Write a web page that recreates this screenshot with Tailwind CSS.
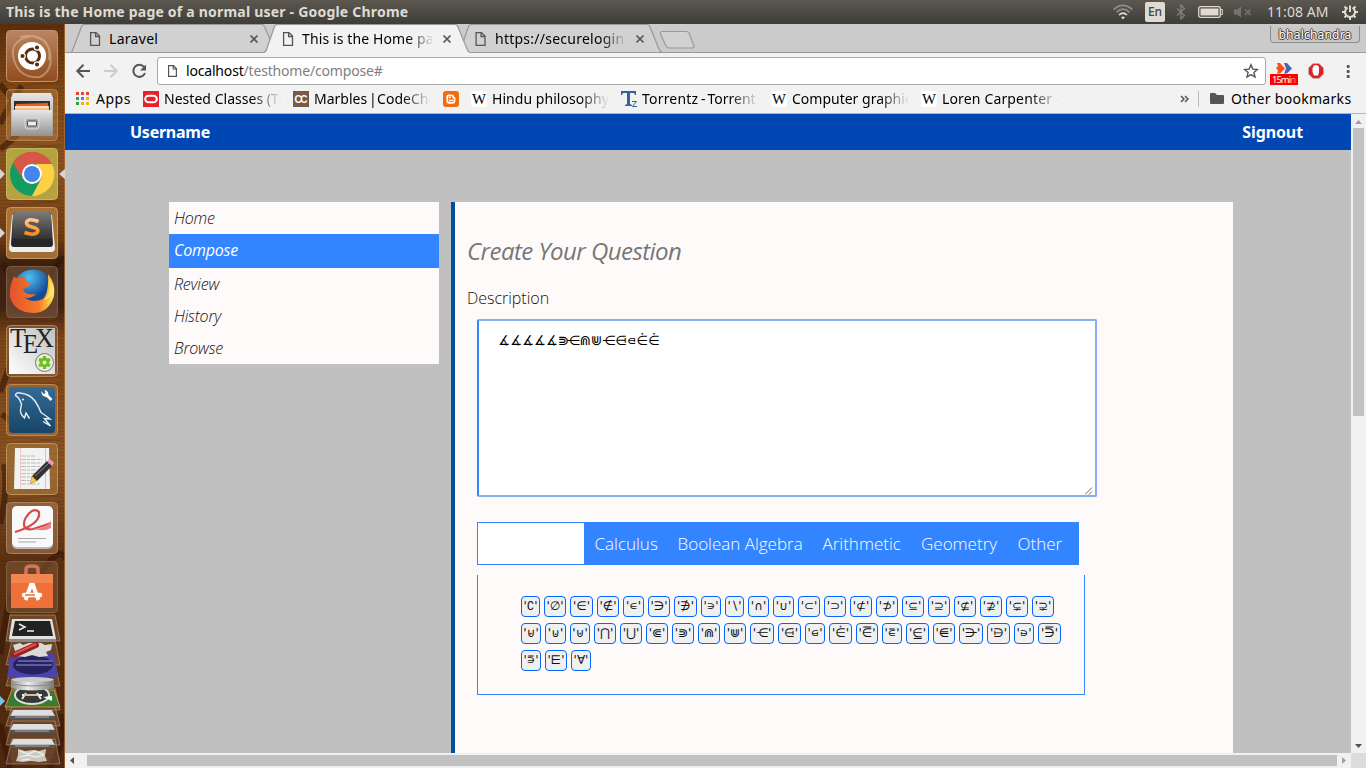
<!DOCTYPE html>
<html lang="en"><head><meta charset="utf-8"><title>This is the Home page of a normal user</title>
<script src="https://cdn.jsdelivr.net/npm/@tailwindcss/browser@4"></script></head>
<body class="w-[1366px] h-[768px] overflow-hidden flex flex-col font-['Noto_Sans','DejaVu_Sans',sans-serif] text-black">
<header class="h-6 shrink-0 bg-linear-to-b from-[#5c5850] to-[#3e3d39] text-[#dfdbd2] flex items-center justify-between pl-[6px] pr-[8px]">
  <h1 class="text-[14px] font-bold leading-6 whitespace-nowrap tracking-[0.21px]">This is the Home page of a normal user - Google Chrome</h1>
  <div class="flex items-center h-6">
    <svg class="w-5 h-5 mr-3" viewBox="0 0 20 20" fill="none" stroke-width="1.7"><path d="M0.7 7.5Q10-.8 19.300 7.500M3.500 10.300Q10 4 16.500 10.300" stroke="#908d85"/><path d="M6 13Q10 9 14 13" stroke="#dfdbd2"/><path d="M8 15.300Q10 13.500 12 15.300L10 17.500Z" fill="#dfdbd2"/></svg>
    <span class="w-5 h-5 rounded-[2px] bg-[#dfdbd2] text-[#45443f] text-[12px] leading-5 text-center mr-[11px] font-medium">En</span>
    <svg class="w-[10px] h-4 mr-[12px]" viewBox="0 0 10 16" fill="none" stroke="#85827a" stroke-width="1.3"><path d="M1 4.500L8.500 11.500L5 15V1L8.500 4.500L1 11.500"/></svg>
    <svg class="w-[25px] h-3 mr-[11px]" viewBox="0 0 25 12"><rect x=".7" y=".7" width="21.600" height="10.600" rx="2" fill="none" stroke="#dfdbd2" stroke-width="1.300"/><rect x="2.500" y="2.500" width="18" height="7" fill="#dfdbd2"/><path d="M23 3.500h1.300v5H23" fill="none" stroke="#dfdbd2"/></svg>
    <svg class="w-[18px] h-3 mr-[15px]" viewBox="0 0 18 12"><path d="M0 3.500h3L7 .5v11L3 8.500H0Z" fill="#75736b"/><path d="M11 3.500l5.500 5.500M16.500 3.500L11 9" stroke="#75736b" stroke-width="1.700"/></svg>
    <span class="text-[14px] leading-6 tracking-[.05px] w-[61px] whitespace-nowrap mr-[14px]">11:08 AM</span>
    <svg class="w-4 h-4" viewBox="0 0 16 16" fill="none" stroke="#dfdbd2"><path d="M5.500 3.700A5 5 0 1 0 10.500 3.700" stroke-width="2"/><path d="M8 1.500V8" stroke-width="2"/><path d="M2.500 2.500l2 2M13.500 2.500l-2 2M0 8h3M13 8h3M2.500 13.500l2-2M13.500 13.500l-2-2M8 13v3" stroke-width="2"/></svg>
  </div>
</header>
<div class="flex h-[744px]">
<!-- launcher -->
<aside class="w-[65px] shrink-0 h-full relative overflow-hidden bg-[#683711]">
 <svg class="absolute inset-0 w-[65px] h-[744px]" viewBox="0 0 65 744"><defs>
  <linearGradient id="wood" x1="0" y1="0" x2="0" y2="1"><stop offset="0" stop-color="#5e2f0a"/><stop offset=".1" stop-color="#834a17"/><stop offset=".2" stop-color="#8a5422"/><stop offset=".29" stop-color="#6e3b10"/><stop offset=".32" stop-color="#3c2110"/><stop offset=".38" stop-color="#402312"/><stop offset=".42" stop-color="#7c451a"/><stop offset=".6" stop-color="#8a5322"/><stop offset=".72" stop-color="#5c3112"/><stop offset="1" stop-color="#4f280e"/></linearGradient>
  <pattern id="grain" width="65" height="7" patternUnits="userSpaceOnUse"><path d="M0 2Q20 0 35 2T65 1M0 5Q25 6 40 4T65 5" fill="none" stroke="#371700" stroke-opacity=".22"/></pattern></defs>
  <rect width="65" height="744" fill="url(#wood)"/><rect width="65" height="744" fill="url(#grain)"/>
  <path d="M0 100Q14 72 22 62M0 60L14 78M0 125Q30 105 22 90M2 240L18 262M45 262Q60 230 65 236M0 368Q12 340 16 310M2 390L14 400M0 500Q8 470 4 440M40 550Q60 520 65 535M0 630L10 570M10 744L0 700M50 744Q65 720 62 690" fill="none" stroke="#35140a" stroke-opacity=".6" stroke-width="6"/>
  <path d="M64.500 0V744" stroke="#b8702f" stroke-opacity=".7"/>
  <g fill="#d9d5d0"><path d="M0 145l5 5-5 5ZM0 204l5 5-5 5ZM65 145l-6 5 6 5Z"/></g><path d="M0 672l5 5-5 5Z" fill="#74c5ee"/>
 </svg>
 <div class="relative flex flex-col gap-[7px] pl-[6px] pt-[6px]">
  <svg class="w-[52px] h-[52px]" viewBox="0 0 52 52"><defs><linearGradient id="ub" x1="0" y1="0" x2="0" y2="1"><stop stop-color="#b98563"/><stop offset="1" stop-color="#914c1c"/></linearGradient></defs><rect x=".5" y=".5" width="51" height="51" rx="4" fill="url(#ub)" stroke="#bf9373"/><path d="M8 30Q2 10 26 6Q46 8 43 30M8 30Q14 49 34 47Q49 40 43 18M14 7Q38 2 44 22" fill="none" stroke="#e4c1a4" stroke-opacity=".5" stroke-width="2"/><circle cx="26" cy="26" r="14" fill="#fff"/><circle cx="26.500" cy="26" r="7" fill="none" stroke="#5a2c10" stroke-width="3"/><g fill="#5a2c10" stroke="#fff" stroke-width="1.200"><circle cx="16.500" cy="26" r="2.700"/><circle cx="31" cy="17.500" r="2.700"/><circle cx="31" cy="34.500" r="2.700"/></g></svg>
  <svg class="w-[52px] h-[52px]" viewBox="0 0 52 52"><defs><linearGradient id="gr" x1="0" y1="0" x2="0" y2="1"><stop stop-color="#e6e6e6"/><stop offset="1" stop-color="#929292"/></linearGradient></defs><rect x=".5" y=".5" width="51" height="51" rx="4" fill="#c58b4a" fill-opacity=".4" stroke="#c49665" stroke-opacity=".7"/><path d="M7 4H45L47 9V47H5V9Z" fill="url(#gr)"/><rect x="8" y="12" width="36" height="10" fill="#303030"/><path d="M10 21V15l32-1v7Z" fill="#e86225"/><path d="M9 21v-4h34v4Z" fill="#f8c07e"/><path d="M9 18H42" stroke="#fff"/><rect x="6" y="21" width="40" height="26" rx="1" fill="url(#gr)"/><rect x="19" y="29" width="14" height="11" rx="3" fill="#aaa" stroke="#ddd"/><rect x="21.500" y="32" width="9" height="5" rx="1" fill="#eee" stroke="#444"/></svg>
  <svg class="w-[52px] h-[52px]" viewBox="0 0 52 52"><rect x=".5" y=".5" width="51" height="51" rx="4" fill="#b4a33f" stroke="#c4b661"/><circle cx="26" cy="26" r="22" fill="#149b5f"/><path d="M7 15A22 22 0 0 1 46 16H26L17 31Z" fill="#d85748"/><path d="M46 16A22 22 0 0 1 26 48L36 29L30 16Z" fill="#fdd046"/><circle cx="26" cy="26" r="10" fill="#fff"/><circle cx="26" cy="26" r="8" fill="#4485ed"/></svg>
  <svg class="w-[52px] h-[52px]" viewBox="0 0 52 52"><defs><linearGradient id="su" x1="0" y1="0" x2="0" y2="1"><stop stop-color="#7a7a7a"/><stop offset=".5" stop-color="#555"/><stop offset="1" stop-color="#313131"/></linearGradient><linearGradient id="so" x1="0" y1="0" x2="0" y2="1"><stop stop-color="#ffc98a"/><stop offset="1" stop-color="#f98b1c"/></linearGradient></defs><rect x=".5" y=".5" width="51" height="51" rx="4" fill="#b77e3e" fill-opacity=".8" stroke="#c6965d"/><path d="M6 8L3 41q0 4 4 4H45q4 0 4-4L46 8Z" fill="#ededed"/><path d="M10 5H42q3 0 3 3L47 37q0 3-3 3H8q-3 0-3-3L7 8q0-3 3-3Z" fill="#262626"/><path d="M10 5H42q3 0 3 3L46 32H6L7 8q0-3 3-3Z" fill="url(#su)"/><path d="M32.500 14.500Q22 10.500 20.500 15.500Q20 18.500 26 20Q33 21.500 31.500 25Q29 29 18.500 25.500" fill="none" stroke="url(#so)" stroke-width="3.600"/></svg>
  <svg class="w-[52px] h-[52px]" viewBox="0 0 52 52"><defs><radialGradient id="fx" cx=".4" cy=".2"><stop stop-color="#4ec0f3"/><stop offset="1" stop-color="#164b94"/></radialGradient><linearGradient id="fo" x1="0" y1="0" x2="1" y2="0"><stop stop-color="#e5512d"/><stop offset=".65" stop-color="#f47d28"/><stop offset="1" stop-color="#ffe74a"/></linearGradient></defs><rect x=".5" y=".5" width="51" height="51" rx="4" fill="#82624a" fill-opacity=".5" stroke="#7b5a43"/><circle cx="27" cy="24" r="20.500" fill="url(#fx)"/><path d="M8 10Q10 14 15 11Q20 10 20 16L25 17Q23 22 17 23Q19 30 30 28Q23 34 18 31Q26 38 37 33Q43 27 42 8Q50 18 48 30Q43 47 27 47Q8 46 4 31Q3 20 8 10Z" fill="url(#fo)"/><path d="M43 14Q46 27 38 34Q44 33 46 27Q45 36 37 41Q48 34 48 23Z" fill="#ffe46b"/></svg>
  <svg class="w-[52px] h-[52px]" viewBox="0 0 52 52"><defs><linearGradient id="tx" x1="1" y1="0" x2="0" y2="1"><stop stop-color="#c0c0c0"/><stop offset="1" stop-color="#fff"/></linearGradient></defs><rect x=".5" y=".5" width="51" height="51" rx="4" fill="#8a663d" fill-opacity=".6" stroke="#b08754"/><rect x="3" y="3" width="46" height="46" fill="url(#tx)"/><g font-family="Liberation Serif" font-size="27" fill="#222"><text x="4" y="22" textLength="16" lengthAdjust="spacingAndGlyphs">T</text><text x="17" y="28" textLength="15" lengthAdjust="spacingAndGlyphs">E</text><text x="29" y="22" textLength="19" lengthAdjust="spacingAndGlyphs">X</text></g><circle cx="38.500" cy="37.500" r="9" fill="#e9eed9" stroke="#777"/><circle cx="38.500" cy="37.500" r="3.500" fill="none" stroke="#70bd22" stroke-width="3"/><path d="M38.500 31v3M38.500 41v3M33 34l2.500 1.500M41.500 39.500L44 41M33 41l2.500-1.500M41.500 35.500L44 34" stroke="#70bd22" stroke-width="3"/></svg>
  <svg class="w-[52px] h-[52px]" viewBox="0 0 52 52"><defs><linearGradient id="my" x1="0" y1="0" x2="0" y2="1"><stop stop-color="#356b96"/><stop offset="1" stop-color="#174568"/></linearGradient></defs><rect x=".5" y=".5" width="51" height="51" rx="4" fill="#a8763c" fill-opacity=".6" stroke="#b98b52"/><rect x="3" y="3" width="46" height="46" rx="4" fill="url(#my)"/><path d="M23.500 34.500L20 29L18.500 34Q14 30 14.500 26L15.500 20Q13 13 9.500 11.500Q10 8 14 9Q24 10 29 17Q33 23 35 28.500Q39 31 44 35L38.500 34.500Q41 38 44.500 42L37 37.500" fill="none" stroke="#e4eef5" stroke-width="1.400"/><circle cx="17" cy="15.500" r=".9" fill="#fff"/><path d="M35.500 7a5 5 0 0 0 5 6l4 4 2-2-4-4a5 5 0 0 0-4-5l1 3-2 1Z" fill="#fff"/></svg>
  <svg class="w-[52px] h-[52px]" viewBox="0 0 52 52"><rect x=".5" y=".5" width="51" height="51" rx="4" fill="#a7783e" fill-opacity=".6" stroke="#bb9159"/><path d="M9 5H43L44 46H8Z" fill="#f2f2f2"/><path d="M14.500 5V46" stroke="#f3b9b9" stroke-width=".7"/><path d="M39.500 5V46" stroke="#9fb9e2" stroke-width=".7"/><path d="M15 13H29M15 16.500H36M15 20H36M15 23.500H36M15 27H33M15 30.500H30M15 34H26M15 37.500H24M15 41H35" stroke="#b5b5b5" stroke-width=".9" stroke-dasharray="5 1 3 1"/><path d="M26 33L41 18l5 5L31 38L24 41Z" fill="#333"/><path d="M41 18l2-2q2 0 5 4l-2 3Z" fill="#eb9bc0"/><path d="M26 33l5 5-7 3Z" fill="#efc946"/><path d="M29 33L43 20" stroke="#888"/></svg>
  <svg class="w-[52px] h-[52px]" viewBox="0 0 52 52"><rect x=".5" y=".5" width="51" height="51" rx="4" fill="#a17654" fill-opacity=".6" stroke="#a98062"/><rect x="6" y="4" width="41" height="43" rx="5" fill="#bbb"/><rect x="6" y="4" width="41" height="41" rx="5" fill="#f9f9f9"/><path d="M9 30Q35 22 33 10Q27 4 19 17Q15 29 27 27Q37 24 45 21" fill="none" stroke="#d7484b" stroke-width="2.200"/><path d="M28 27Q40 26 45 19V26Q38 30 28 27Z" fill="#e58586"/><path d="M12 36.500H40M12 40H30" stroke="#aaa" stroke-width="1.200"/></svg>
  <svg class="w-[52px] h-[52px]" viewBox="0 0 52 52"><rect x=".5" y=".5" width="51" height="51" rx="4" fill="#7c5535" fill-opacity=".6" stroke="#82603e"/><path d="M20 17V8q0-3 6-3t6 3v9" fill="none" stroke="#d8745c" stroke-width="3.500"/><path d="M5 13H47V47H5Z" fill="#ee7139"/><path d="M5 13H47V22H5Z" fill="#f38550"/><path d="M19.500 39L25 24H27L32.500 39" fill="none" stroke="#fff" stroke-width="4"/><path d="M18 34H34" stroke="#fff" stroke-width="4.500" stroke-linecap="round"/><path d="M19 34H29" stroke="#ed6d30" stroke-width="1.500"/></svg>
 </div>
 <svg class="relative w-[65px] h-[155px]" viewBox="0 0 65 155"><defs><linearGradient id="metal" x1="0" y1="0" x2="1" y2="0"><stop stop-color="#8d8d8d"/><stop offset=".4" stop-color="#eee"/><stop offset="1" stop-color="#777"/></linearGradient></defs>
  <g fill="#d4b091" fill-opacity=".2" stroke="#c7ab92" stroke-opacity=".5"><path d="M10 2H55L60 28H6ZM12 27H55L60 52H6ZM12 51H55L60 73H6ZM12 75H55L60 97H6ZM12 93H55L60 113H6ZM12 108H55L60 132H6ZM12 126H55L60 151H6Z"/></g>
  <path d="M12 6H52L56 26H9Z" fill="#e0e0dd"/><path d="M15 8H50L53 23H12Z" fill="#222"/><path d="M9 26H56v3H9Z" fill="#888"/><path d="M19 11l6 3-6 3M27 18h7" fill="none" stroke="#eee" stroke-width="1.500"/>
  <path d="M11 41H54L58 64H7Z" fill="#4d42a8"/><ellipse cx="33" cy="52" rx="20" ry="9.500" fill="#25235f"/><path d="M18 48H52M16 52H52" stroke="#9c97d5"/><path d="M13 32l7-2 3 2 6-2 12 0 4 2 7-1-1 6-5 2 2 4-9 1-7-2-7 2-8-1Z" fill="#d9d9d9"/><path d="M14 42L36 32" stroke="#982322" stroke-width="6" stroke-linecap="round"/><path d="M14 41L36 31" stroke="#db534b" stroke-width="2"/>
  <path d="M12 77H54L60 94H5Z" fill="#357d34" stroke="#ed813c"/><ellipse cx="32" cy="82" rx="17" ry="9" fill="#343a38" stroke="#ddd" stroke-width="2"/><path d="M22 82H42M26 80l-4 6M37 80l4 6" stroke="#eee" stroke-width="2"/><path d="M24 82H38" stroke="#f17a36"/><path d="M43 84L52 83V88Z" fill="#fff"/>
  <path d="M11 66V75Q32 80 54 75V66Z" fill="url(#metal)"/><ellipse cx="32.500" cy="66.500" rx="21" ry="2.500" fill="#c9c9c9"/><path d="M12 71Q32 75 53 71" fill="none" stroke="#888"/>
  <g id="drive"><path d="M13 97H52L55 103V106H10V103Z" fill="#bcbcbc"/><path d="M14 97H51l3 5H11Z" fill="#dedede"/><path d="M10 103H55v3H10Z" fill="#555"/><path d="M15 104H49" stroke="#aaa"/></g>
  <use href="#drive" y="14"/><use href="#drive" y="29"/>
  <path d="M18 136l7 2 8-1 6 1 7-2-1 7 2 5-8 1-8-1-9 1-6-1 2-6Z" fill="#c9c7be"/><path d="M20 138l8 3 7-3 8 3M20 144l8-2 8 2 8-2M22 147l8-1" fill="none" stroke="#eceae3" stroke-width="1.500"/>
 </svg>
</aside>
<!-- browser -->
<section class="w-[1301px] flex flex-col">
 <div class="h-[29px] shrink-0 relative bg-[#cbcbcb]">
  <svg class="absolute inset-0 w-[1301px] h-[33px]" viewBox="65 24 1301 33" fill="none" stroke="#999" stroke-width="1.200"><path d="M65 52.500H1366"/><path d="M71 52.500Q72 52 73 49L81 28Q82 24.500 84 24.500H262Q264 24.500 265 28L274 48Q275 52 277 52.500Z" fill="#d1d1d1"/><path d="M457 52.500Q460 51 461 48L468 28Q469 24.500 471 24.500H647Q649 24.500 650 27L659 49Q660 52 663 52.500Z" fill="#d1d1d1"/><path d="M262 54L264 52.500Q266 51 267 48L274 28Q275 24.500 277 24.500H455Q457 24.500 458 27L467 49Q468 52 470 52.500V54Z" fill="#f2f2f2" stroke="none"/><path d="M263 52.500Q266 52 267 48L274 28Q275 24.500 277 24.500H455Q457 24.500 458 27L467 49Q468 52 470 52.500"/><path d="M662 31.500H686Q688 31.500 689 33L694 46Q694 48 692 48H669Q667 48 666 46L660.500 34Q660 31.500 662 31.500Z" fill="#d1d1d1"/>
  <g stroke="#555" stroke-width="1.300"><path id="pg" d="M90.600 32.600H96L99.500 36V45.400H90.600ZM95.600 33V36.500H99"/><use href="#pg" x="193"/><use href="#pg" x="385.500"/></g><g stroke="#555" stroke-width="1.700"><path id="x" d="M250.500 35.500l7 7M257.500 35.500l-7 7"/><use href="#x" x="193"/><use href="#x" x="386"/></g></svg>
  <div class="relative flex h-[29px] text-[14px] leading-[29px] whitespace-nowrap">
   <span class="ml-[44px] w-[193px] tracking-[.3px]">Laravel</span><span class="w-[193px]"><b class="block font-normal w-[132px] overflow-hidden mask-r-from-80% tracking-[.12px]">This is the Home page</b></span><span class="w-[132px] overflow-hidden mask-r-from-80% tracking-[.25px]">https://securelogin</span>
   <span class="ml-auto mr-[6px] mt-[2px] w-[90px] h-[17px] border border-t-0 border-[#8d8d8d] rounded-b-[4px] bg-[#c8c8c8] text-white text-[12px] leading-[18px] text-center tracking-[.2px] [text-shadow:1px_0_#444,-1px_0_#444,0_1px_#444,0_-1px_#444]">bhalchandra</span>
  </div>
 </div>
 <div class="h-[33px] shrink-0 bg-[#f2f2f2] flex items-center pt-[3px]">
  <svg class="w-[92px] h-[28px]" viewBox="65 57 92 28" fill="none" stroke-width="2"><path d="M90 71H77.500M83.500 64.800L77.300 71L83.500 77.200" stroke="#555"/><path d="M104 71H116.500M110.500 64.800L116.700 71L110.500 77.200" stroke="#ccc"/><path d="M144 67A6 6 0 1 0 145 73" stroke="#555"/><path d="M146 64.500V70.500H140Z" fill="#555"/></svg>
  <div class="h-[28px] w-[1109px] bg-white border border-[#a9a9a9] rounded-[3px] flex items-center">
   <svg class="w-[9px] h-[12px] ml-[10px] mr-[9px]" viewBox="0 0 9 12" fill="none" stroke="#555" stroke-width="1.200"><path d="M.6.600H5.500L8.400 3.500V11.400H.6ZM5.200.600V4H8.400"/></svg>
   <span class="text-[14px] leading-5 whitespace-nowrap tracking-[-.18px]">localhost<span class="text-[#808080]">/testhome/compose#</span></span>
   <svg class="w-4 h-4 ml-auto mr-[6px]" viewBox="0 0 16 16" fill="none" stroke="#555" stroke-width="1.400"><path d="M8 1.800L9.800 6.100L14.400 6.500L10.900 9.500L12 14L8 11.600L4 14L5.100 9.500L1.600 6.500L6.200 6.100Z"/></svg>
  </div>
  <svg class="w-[100px] h-[28px]" viewBox="1266 57 100 28"><path d="M1277 63l3 0 5 5.500-5 5h-3l1-3-2-2.500 2-2Z" fill="#f4511e"/><path d="M1284 63l3 0 5 5.500-5 5h-3l2-5Z" fill="#4268b2"/><rect x="1270" y="74" width="28" height="11" fill="red"/><text x="1272" y="83" fill="#fff" font-size="9.500" font-family="Noto Sans" textLength="24">15mi<tspan fill="#ff8080">n</tspan></text><path d="M1313 63.500h6l4.500 4.500v6l-4.500 4.500h-6l-4.500-4.500v-6Z" fill="#dd2222" stroke="#b8b8b8" stroke-width=".7"/><path d="M1312.500 72V67.500h1V65.500h1.500V65h1.500v.5h1.500v1h1V72l-1 3.500h-4Z" fill="#fff"/><g fill="#555"><rect x="1346.700" y="65" width="3" height="3" rx="1"/><rect x="1346.700" y="70" width="3" height="3" rx="1"/><rect x="1346.700" y="75" width="3" height="3" rx="1"/></g></svg>
 </div>
 <nav class="h-[28px] shrink-0 bg-[#f2f2f2] border-b border-[#b4b4b4] flex items-center text-[14px] whitespace-nowrap leading-[24px] overflow-hidden pb-[2px]">
  <svg class="w-[13px] h-[13px] ml-[11px] mr-[7px]" viewBox="0 0 13 13"><path d="M0 0h3v3H0ZM5 0h3v3H5ZM10 0h3v3h-3Z" fill="#e54335"/><path d="M0 5h3v3H0Z" fill="#2ba24c"/><path d="M5 5h3v3H5Z" fill="#4285f4"/><path d="M10 5h3v3h-3ZM5 10h3v3H5ZM10 10h3v3h-3Z" fill="#f6b500"/><path d="M0 10h3v3H0Z" fill="#2ba24c"/></svg><span class="w-[47px] tracking-[.5px]">Apps</span>
  <svg class="w-4 h-4 mr-[5px]" viewBox="0 0 16 16"><path d="M0 0h16v16H0Z" fill="#e8202c"/><rect x="2.200" y="4.700" width="11.600" height="6.600" rx="3.300" fill="none" stroke="#fff" stroke-width="2"/></svg><span class="w-[117px] overflow-hidden mask-r-from-75% mr-[12px] tracking-[.03px]">Nested Classes (The</span>
  <svg class="w-4 h-4 mr-[5px]" viewBox="0 0 16 16"><path d="M0 0h16v16H0Z" fill="#765b48"/><text x="1.500" y="12" font-family="Liberation Sans" font-weight="700" font-size="10" fill="#fff" textLength="13">CC</text></svg><span class="w-[117px] overflow-hidden mask-r-from-75% mr-[12px]">Marbles<span class="tracking-[-1.700px]"> | </span>CodeChef</span>
  <svg class="w-4 h-4 mr-[12px]" viewBox="0 0 16 16"><rect width="16" height="16" rx="3" fill="#f66b0c"/><path d="M5.700 4.300H8.500Q10.300 4.300 10.300 6.200Q10.400 7 11.500 7.200V9.800Q11.500 11.800 9.500 11.800H6Q4.300 11.800 4.300 10V6Q4.300 4.300 5.700 4.300Z" fill="none" stroke="#fff" stroke-width="1.800"/><path d="M6 6.600H8M6 9.500H10" stroke="#fff" stroke-width="1.500"/></svg>
  <svg class="w-4 h-4 mr-[5px]" viewBox="0 0 16 16"><rect width="16" height="16" rx="3" fill="#fff"/><text x="1" y="13" font-size="14" font-family="Liberation Serif" textLength="14" lengthAdjust="spacingAndGlyphs">W</text></svg><span class="w-[117px] overflow-hidden mask-r-from-75% mr-[12px] tracking-[.05px]">Hindu philosophy</span>
  <svg class="w-4 h-4 mr-[5px]" viewBox="0 0 16 16"><path d="M0 0H15V4H14L13 2H9V13L11 14V15H4V14L6 13V2H2L1 4H0Z" fill="#35649a"/><path d="M11 10.500H15.500L11.500 15.500H16" stroke="#35649a" fill="none"/></svg><span class="w-[117px] overflow-hidden mask-r-from-75% mr-[12px]"><span class="tracking-[.2px]">Torrentz</span><span class="tracking-[-.9px]"> - </span>Torrent</span>
  <svg class="w-4 h-4 mr-[5px]" viewBox="0 0 16 16"><rect width="16" height="16" rx="3" fill="#fff"/><text x="1" y="13" font-size="14" font-family="Liberation Serif" textLength="14" lengthAdjust="spacingAndGlyphs">W</text></svg><span class="w-[117px] overflow-hidden mask-r-from-75% mr-[12px]">Computer graphics</span>
  <svg class="w-4 h-4 mr-[5px]" viewBox="0 0 16 16"><rect width="16" height="16" rx="3" fill="#fff"/><text x="1" y="13" font-size="14" font-family="Liberation Serif" textLength="14" lengthAdjust="spacingAndGlyphs">W</text></svg><span class="w-[117px] overflow-hidden mask-r-from-75% tracking-[.15px]">Loren Carpenter -</span>
  <svg class="w-[44px] h-4 ml-auto mr-[7px]" viewBox="1181 91 44 16"><path d="M1182 96l3 3-3 3M1186 96l3 3-3 3" fill="none" stroke="#555" stroke-width="1.500"/><path d="M1199.500 91v16" stroke="#bbb"/><path d="M1212 93h4l2 2h6q1 0 1 1v7q0 1-1 1h-12q-1 0-1-1v-9q0-1 1-1Z" fill="#555"/></svg><span class="w-[135px] tracking-[.3px]">Other bookmarks</span>
 </nav>
 <div class="flex h-[639px]">
  <main class="w-[1286px] h-[639px] bg-[#c0c0c0] overflow-hidden font-['Open_Sans','Noto_Sans',sans-serif]">
   <div class="h-9 bg-[#0047b3] flex items-center justify-between pl-[65px] pr-[48px] text-white font-bold text-[16px]"><span class="font-['Noto_Sans'] tracking-[-.25px]">Username</span><span class="font-['Noto_Sans'] tracking-[-.1px]">Signout</span></div>
   <div class="flex items-start pt-[52px] pl-[104px]">
    <ul class="w-[270px] bg-[#fffafa] mr-3 italic font-light text-[16px] text-[#111] tracking-[-.2px]">
     <li class="h-8 leading-8 pl-[5px]">Home</li><li class="h-[34px] leading-[33px] pl-[5px] bg-[#3385ff] text-white font-normal">Compose</li><li class="h-8 leading-8 pl-[5px]">Review</li><li class="h-8 leading-8 pl-[5px]">History</li><li class="h-8 leading-8 pl-[5px]">Browse</li>
    </ul>
    <section class="w-[782px] h-[551px] bg-[#fffafa] border-l-4 border-[#004f9e] pl-3">
     <h2 class="pt-[29px] h-[80px] text-[24px] leading-[40px] italic text-[#777] tracking-[-.54px]">Create Your Question</h2>
     <label class="block h-[37px] text-[16px] leading-[33px] font-light text-[#111] tracking-[-.02px]">Description</label>
     <div class="relative ml-[10px] w-[620px] h-[178px] bg-white border-2 border-[#86aef0] border-l-[#3385ff] rounded-[2px] pl-[19px] pt-[11px] font-['DejaVu_Sans'] text-[13.33px] leading-[18px]"><span>∡∡∡∡∡<span class="tracking-[-2.500px]">⋑</span>⋲⋒⋓⋲⋳⋴⋵⋵</span><svg class="absolute right-[2px] bottom-0 w-2 h-2" viewBox="0 0 8 8"><path d="M0 7.500L7 .5M4 7.500L7 4.500" stroke="#666"/></svg></div>
     <div class="ml-[10px] mt-[25px] w-[602px] h-[43px] bg-[#3385ff] border border-[#3385ff] flex text-[17px] leading-[41px] font-light text-white whitespace-nowrap"><span class="w-[106px] h-[41px] bg-white mr-[10.500px]"></span><span class="w-[83px]">Calculus</span><span class="w-[145px]">Boolean Algebra</span><span class="w-[98.500px]">Arithmetic</span><span class="w-[96.500px]">Geometry</span><span>Other</span></div>
     <div id="symbols" class="ml-[10px] mt-[10px] w-[608px] h-[120px] border border-t-0 border-[#3385ff] pt-[21px] pl-[43px] flex flex-col gap-[6px] font-['DejaVu_Sans'] text-[12px] text-[#111]"></div>
    </section>
   </div>
  </main>
  <div class="w-[15px] h-[639px] bg-[#f1f1f1] flex flex-col items-center"><svg class="w-[15px] h-[14px]" viewBox="0 0 15 14"><path d="M4 10L7.500 6L11 10Z" fill="#a0a0a0"/></svg><div class="w-[11px] h-[288px] bg-[#c1c1c1]"></div><svg class="w-[15px] h-[15px] mt-auto" viewBox="0 0 15 15"><path d="M4 6L7.500 10L11 6Z" fill="#505050"/></svg></div>
 </div>
 <div class="flex h-[15px] bg-[#f1f1f1] items-center"><svg class="w-[22px] h-[15px]" viewBox="0 0 22 15"><path d="M9 4L5 7.500L9 11Z" fill="#505050"/></svg><div class="w-[1250px] h-[11px] bg-[#c1c1c1]"></div><svg class="w-[14px] h-[15px]" viewBox="0 0 14 15"><path d="M5 4L9 7.500L5 11Z" fill="#a0a0a0"/></svg><div class="w-[15px] h-[15px] bg-[#dcdcdc]"></div></div>
</section>
</div>
<script>
// Each row pairs its set symbols with the button widths in pixels.
const rows=[
 ['∁∅∈∉∊∋∌∍∖∩∪⊂⊃⊄⊅⊆⊇⊈⊉⊊⊋',[19,22,23,22,21,22,23,20,19,21,21,22,22,22,22,22,22,22,22,22,22]],
 ['⊌⊍⊎⋂⋃⋐⋑⋒⋓⋲⋳⋴⋵⋶⋷⋸⋹⋺⋻⋼⋽',[20,21,20,22,22,22,22,22,22,24,23,20,23,22,20,23,22,24,23,20,23]],
 ['⋾⋿∀',[20,22,20]]];
const box=document.getElementById('symbols');
for(const [s,w] of rows){const r=document.createElement('div');r.className='flex gap-[4px] h-[21px]';[...s].forEach((c,i)=>{const b=document.createElement('button');b.className='h-[21px] shrink-0 border border-[#0066ff] rounded-[4px] bg-[#f0f0f0] leading-[18px] flex justify-center whitespace-nowrap';b.style.width=w[i]+'px';b.textContent="'"+c+"'";r.append(b)});box.append(r)}
</script>
</body></html>
